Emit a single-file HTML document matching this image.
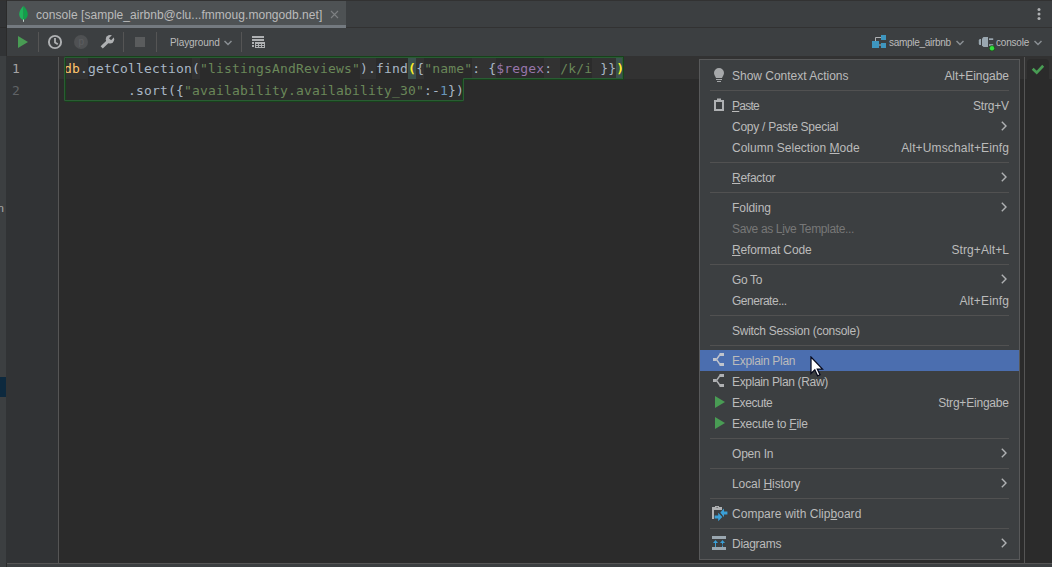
<!DOCTYPE html>
<html><head><meta charset="utf-8">
<style>
*{box-sizing:border-box;margin:0;padding:0}
html,body{width:1052px;height:567px;overflow:hidden;background:#2b2b2b}
body{position:relative;font-family:"Liberation Sans",sans-serif;font-size:12px;color:#bbbbbb}
.a{position:absolute}
.t{position:absolute;white-space:pre;line-height:16px}
#code .t{font-family:"DejaVu Sans Mono","Liberation Mono",monospace;font-size:13px;letter-spacing:0.174px;line-height:22px;color:#a9b7c6}
.vs{position:absolute;width:1px;background:#555555;top:32px;height:20px}
.mi{position:absolute;left:732px;margin-top:1px;white-space:pre;line-height:16px;color:#bbbbbb}
.sc{position:absolute;margin-top:1px;white-space:pre;line-height:16px;color:#bbbbbb;text-align:right}
.sep{position:absolute;left:710px;width:299px;height:1px;background:#515151}
.arr{position:absolute;left:1001px;width:6px;height:10px}
u{text-decoration:underline;text-underline-offset:1px}
</style></head><body>

<!-- tab bar -->
<div class="a" id="tabbar" style="left:0;top:0;width:1052px;height:28px;background:#3c3f41"></div>
<div class="a" style="left:0;top:0;width:1052px;height:1px;background:#323232"></div>
<div class="a" style="left:0;top:27px;width:1052px;height:1px;background:#323232"></div>
<div class="a" id="tab" style="left:7px;top:1px;width:339px;height:27px;background:#4e5254"></div>
<div class="a" style="left:7px;top:25px;width:339px;height:3px;background:#747a80"></div>
<svg class="a" style="left:18px;top:5px" width="11" height="18" viewBox="0 0 11 18"><path d="M5.5 0.8C3.2 3.6 1.2 6 1.2 9.3c0 3 2 4.9 4.3 5.9z" fill="#1fb45a"/><path d="M5.5 0.8C7.8 3.6 9.8 6 9.8 9.3c0 3-2 4.9-4.3 5.9z" fill="#10a14a"/><rect x="5" y="14.500" width="1" height="2.300" fill="#c4d3cc"/></svg>
<div class="t" id="tabtxt" style="left:36px;top:7px;letter-spacing:0.04px;color:#bbbbbb">console [sample_airbnb@clu...fmmoug.mongodb.net]</div>
<svg class="a" style="left:330px;top:10px" width="9" height="9" viewBox="0 0 9 9"><path d="M1 1L8 8M8 1L1 8" stroke="#7e8183" stroke-width="1.1" fill="none"/></svg>
<svg class="a" style="left:1036px;top:7px" width="6" height="14" viewBox="0 0 6 14"><circle cx="3" cy="2.5" r="1.500" fill="#afb1b3"/><circle cx="3" cy="7" r="1.500" fill="#afb1b3"/><circle cx="3" cy="11.5" r="1.500" fill="#afb1b3"/></svg>

<!-- toolbar -->
<div class="a" id="toolbar" style="left:0;top:28px;width:1052px;height:28px;background:#3c3f41"></div>
<div class="a" style="left:0;top:1px;width:6px;height:55px;background:#313335"></div>
<div class="a" style="left:0;top:27px;width:7px;height:1px;background:#2b2b2b"></div>
<div class="a" style="left:6px;top:0;width:1px;height:56px;background:#2b2b2b"></div>
<svg class="a" style="left:17px;top:35px" width="12" height="14" viewBox="0 0 12 14"><path d="M1 1L11 7L1 13z" fill="#499c54"/></svg>
<div class="vs" style="left:38px"></div>
<svg class="a" style="left:47px;top:34px" width="16" height="16" viewBox="0 0 16 16"><circle cx="8" cy="8" r="6.100" fill="none" stroke="#afb1b3" stroke-width="1.900"/><path d="M8 4v4.400l2.800 1.900" fill="none" stroke="#afb1b3" stroke-width="1.800"/></svg>
<svg class="a" style="left:73px;top:34px" width="16" height="16" viewBox="0 0 16 16"><circle cx="8" cy="8" r="7" fill="#4f5153"/><text x="8.200" y="10.600" font-family="Liberation Sans,sans-serif" font-size="10" text-anchor="middle" fill="#5d5f61">p</text></svg>
<svg class="a" style="left:99px;top:34px" width="16" height="16" viewBox="0 0 16 16"><path d="M2.700 13.300L9 7.400" stroke="#afb1b3" stroke-width="3.200" fill="none"/><circle cx="11" cy="5.200" r="4.200" fill="#afb1b3"/><path d="M11 5.200L16 0.200" stroke="#3c3f41" stroke-width="3" fill="none"/></svg>
<div class="vs" style="left:123px"></div>
<div class="a" style="left:135px;top:37px;width:10px;height:10px;background:#5a5c5d"></div>
<div class="vs" style="left:156px"></div>
<div class="t" id="pg" style="left:170px;top:35px;font-size:10px;letter-spacing:-0.1px;color:#bbbbbb">Playground</div>
<svg class="a" style="left:224px;top:40px" width="8" height="6" viewBox="0 0 8 6"><path d="M0.5 1L4 4.5L7.5 1" stroke="#8b9094" stroke-width="1.500" fill="none"/></svg>
<div class="vs" style="left:241px"></div>
<svg class="a" style="left:252px;top:36px" width="14" height="12" viewBox="0 0 14 12"><g fill="#afb1b3"><rect x="0" y="0" width="12" height="2"/><rect x="0" y="3" width="12" height="2"/><rect x="0" y="6" width="2" height="2"/><rect x="0" y="9" width="2" height="2"/><rect x="3" y="6" width="10" height="6"/></g><g fill="#3c3f41"><rect x="4" y="8" width="2" height="1"/><rect x="7" y="8" width="2" height="1"/><rect x="10" y="8" width="2" height="1"/><rect x="4" y="10" width="2" height="1"/><rect x="7" y="10" width="2" height="1"/><rect x="10" y="10" width="2" height="1"/></g></svg>

<svg class="a" style="left:871px;top:34px" width="16" height="15" viewBox="0 0 16 15"><path d="M4.5 7V3.5H10" stroke="#afb1b3" stroke-width="1" fill="none"/><path d="M8 11H10" stroke="#afb1b3" stroke-width="1"/><g fill="#3e96bf"><rect x="10" y="1" width="5" height="5"/><rect x="1" y="7" width="7" height="7"/><rect x="10" y="9" width="5" height="5"/></g></svg>
<div class="t" id="sa" style="left:889px;top:35px;font-size:10px;letter-spacing:-0.3px;color:#bbbbbb">sample_airbnb</div>
<svg class="a" style="left:956px;top:40px" width="8" height="6" viewBox="0 0 8 6"><path d="M0.5 1L4 4.5L7.5 1" stroke="#8b9094" stroke-width="1.500" fill="none"/></svg>
<svg class="a" style="left:978px;top:36px" width="18" height="16" viewBox="0 0 18 16"><g fill="#9aa7b0"><path d="M3 3v6h-1q-1.2 0-1.2-1.5v-3q0-1.5 1.2-1.5z"/><path d="M4 2.5L5.5 1H10v10H5.500L4 9.500z"/><rect x="11" y="2.300" width="4.200" height="1.700"/><rect x="11" y="8.200" width="4.200" height="1.700"/></g><circle cx="14" cy="12.200" r="3" fill="#22551f"/><circle cx="14" cy="12.200" r="2.200" fill="#30e03c"/></svg>
<div class="t" id="co" style="left:996px;top:35px;font-size:10px;letter-spacing:-0.2px;color:#bbbbbb">console</div>
<svg class="a" style="left:1034px;top:40px" width="8" height="6" viewBox="0 0 8 6"><path d="M0.5 1L4 4.5L7.5 1" stroke="#8b9094" stroke-width="1.500" fill="none"/></svg>

<!-- editor -->
<div class="a" id="leftstrip" style="left:0;top:56px;width:6px;height:511px;background:#3c3f41"></div>
<div class="a" style="left:0;top:377px;width:6px;height:20px;background:#0d293e"></div>
<div class="t" style="left:-2.500px;top:200px;font-size:11.500px;color:#a8a8a8">n</div>
<div class="a" id="gutter" style="left:6px;top:56px;width:52px;height:507px;background:#313335"></div>
<div class="a" style="left:58px;top:56px;width:1px;height:507px;background:#555555"></div>
<div class="a" style="left:7px;top:56px;width:1045px;height:1px;background:#323232"></div>
<div class="a" id="caretrow" style="left:59px;top:57px;width:993px;height:22px;background:#323232"></div>
<div class="a" style="left:1024px;top:57px;width:1px;height:506px;background:#555555"></div>
<div class="a" style="left:1027px;top:59px;width:22px;height:20px;border-radius:4px 4px 0 0;background:#2b2b2b"></div>
<svg class="a" style="left:1031px;top:63px" width="14" height="12" viewBox="0 0 14 12"><path d="M1.700 5.700L5.700 9.600L12.200 2.700" stroke="#499c54" stroke-width="2.700" fill="none"/></svg>
<div class="a" style="left:7px;top:563px;width:1045px;height:1px;background:#555555"></div>
<div class="a" style="left:7px;top:564px;width:1045px;height:3px;background:#3c3f41"></div>

<div class="a" style="left:88px;top:57px;width:104px;height:22px;background:#2b2b2b"></div>
<div class="a" style="left:200px;top:57px;width:160px;height:22px;background:#2b2b2b"></div>
<div class="a" style="left:376px;top:57px;width:32px;height:22px;background:#2b2b2b"></div>
<div class="a" style="left:408px;top:57px;width:8px;height:22px;background:#3b514d"></div>
<div class="a" style="left:424px;top:57px;width:48px;height:22px;background:#2b2b2b"></div>
<div class="a" style="left:496px;top:57px;width:48px;height:22px;background:#2b2b2b"></div>
<div class="a" style="left:560px;top:57px;width:32px;height:22px;background:#2b2b2b"></div>
<div class="a" style="left:616px;top:57px;width:8px;height:22px;background:#3b514d"></div>
<div id="code">
<div class="t" style="left:12px;top:58px;color:#a4a3a3;letter-spacing:0">1</div>
<div class="t" style="left:12px;top:80px;color:#606366;letter-spacing:0">2</div>
<div class="t" id="l1" style="left:64px;top:58px"><span style="color:#ffc66d">db</span>.<span>getCollection</span>(<span style="color:#6a8759">"listingsAndReviews"</span>).<span>find</span><span style="color:#ffef28;font-weight:bold">(</span>{<span style="color:#6a8759">"name"</span>: {<span style="color:#9876aa">$regex</span>: <span style="color:#6a8759">/k/i</span> }}<span style="color:#ffef28;font-weight:bold">)</span></div>
<div class="t" id="l2" style="left:64px;top:80px">        .sort({<span style="color:#6a8759">"availability.availability_30"</span>:-<span style="color:#6897bb">1</span>})</div>
</div>
<svg class="a" style="left:60px;top:54px" width="570" height="50" viewBox="60 54 570 50"><path d="M65.500 56.500H623.500V79.500H462.500V101.500H65.500z" fill="none" stroke="#17421b" stroke-width="1"/><path d="M64.500 57.500H622.500V78.500H463.500V100.500H64.500z" fill="none" stroke="#2a5c34" stroke-width="1"/></svg>

<!-- context menu -->
<div class="a" id="menu" style="left:699px;top:59px;width:321px;height:501px;background:#3c3f41;border:1px solid #58595a"></div>
<div class="a" style="left:700px;top:350px;width:319px;height:21px;background:#4b6eaf"></div>
<div id="mitems">
<div class="mi m" id="mi0" style="top:67px;letter-spacing:-0.012px;">Show Context Actions</div>
<div class="sc m" id="sc0" style="top:67px;left:944.4px;letter-spacing:-0.046px">Alt+Eingabe</div>
<div class="mi m" id="mi1" style="top:97px;letter-spacing:-0.747px;"><u>P</u>aste</div>
<div class="sc m" id="sc1" style="top:97px;left:973.1px;letter-spacing:-0.226px">Strg+V</div>
<div class="mi m" id="mi2" style="top:118px;letter-spacing:-0.263px;">Copy / Paste Special</div>
<svg class="arr" style="top:121px" viewBox="0 0 6 10"><path d="M0.800 0.800L5 5L0.800 9.200" stroke="#afb1b3" stroke-width="1.400" fill="none"/></svg>
<div class="mi m" id="mi3" style="top:139px;letter-spacing:0.010px;">Column Selection <u>M</u>ode</div>
<div class="sc m" id="sc3" style="top:139px;left:901.2px;letter-spacing:0.142px">Alt+Umschalt+Einfg</div>
<div class="mi m" id="mi4" style="top:169px;letter-spacing:-0.251px;"><u>R</u>efactor</div>
<svg class="arr" style="top:172px" viewBox="0 0 6 10"><path d="M0.800 0.800L5 5L0.800 9.200" stroke="#afb1b3" stroke-width="1.400" fill="none"/></svg>
<div class="mi m" id="mi5" style="top:199px;letter-spacing:-0.060px;">Folding</div>
<svg class="arr" style="top:202px" viewBox="0 0 6 10"><path d="M0.800 0.800L5 5L0.800 9.200" stroke="#afb1b3" stroke-width="1.400" fill="none"/></svg>
<div class="mi m" id="mi6" style="top:220px;letter-spacing:-0.358px;color:#777777;">Save as L<u>i</u>ve Template...</div>
<div class="mi m" id="mi7" style="top:241px;letter-spacing:-0.148px;"><u>R</u>eformat Code</div>
<div class="sc m" id="sc7" style="top:241px;left:951.4px;letter-spacing:0.100px">Strg+Alt+L</div>
<div class="mi m" id="mi8" style="top:271px;letter-spacing:-0.353px;">Go To</div>
<svg class="arr" style="top:274px" viewBox="0 0 6 10"><path d="M0.800 0.800L5 5L0.800 9.200" stroke="#afb1b3" stroke-width="1.400" fill="none"/></svg>
<div class="mi m" id="mi9" style="top:292px;letter-spacing:-0.485px;">Generate...</div>
<div class="sc m" id="sc9" style="top:292px;left:959.4px;letter-spacing:0.153px">Alt+Einfg</div>
<div class="mi m" id="mi10" style="top:322px;letter-spacing:-0.268px;">Switch Session (console)</div>
<div class="mi m" id="mi11" style="top:352px;letter-spacing:-0.293px;">Explain Plan</div>
<div class="mi m" id="mi12" style="top:373px;letter-spacing:-0.344px;">Explain Plan (Raw)</div>
<div class="mi m" id="mi13" style="top:394px;letter-spacing:-0.427px;">Execute</div>
<div class="sc m" id="sc13" style="top:394px;left:938.2px;letter-spacing:-0.206px">Strg+Eingabe</div>
<div class="mi m" id="mi14" style="top:415px;letter-spacing:-0.248px;">Execute to <u>F</u>ile</div>
<div class="mi m" id="mi15" style="top:445px;letter-spacing:-0.201px;">Open In</div>
<svg class="arr" style="top:448px" viewBox="0 0 6 10"><path d="M0.800 0.800L5 5L0.800 9.200" stroke="#afb1b3" stroke-width="1.400" fill="none"/></svg>
<div class="mi m" id="mi16" style="top:475px;letter-spacing:-0.088px;">Local <u>H</u>istory</div>
<svg class="arr" style="top:478px" viewBox="0 0 6 10"><path d="M0.800 0.800L5 5L0.800 9.200" stroke="#afb1b3" stroke-width="1.400" fill="none"/></svg>
<div class="mi m" id="mi17" style="top:505px;letter-spacing:0.027px;">Compare with Clip<u>b</u>oard</div>
<div class="mi m" id="mi18" style="top:535px;letter-spacing:-0.280px;">Diagrams</div>
<svg class="arr" style="top:538px" viewBox="0 0 6 10"><path d="M0.800 0.800L5 5L0.800 9.200" stroke="#afb1b3" stroke-width="1.400" fill="none"/></svg>
<div class="sep" style="top:90px"></div>
<div class="sep" style="top:162px"></div>
<div class="sep" style="top:192px"></div>
<div class="sep" style="top:264px"></div>
<div class="sep" style="top:315px"></div>
<div class="sep" style="top:345px"></div>
<div class="sep" style="top:438px"></div>
<div class="sep" style="top:468px"></div>
<div class="sep" style="top:498px"></div>
<div class="sep" style="top:528px"></div>
</div>
<!-- menu icons -->
<svg class="a" style="left:713px;top:67px" width="12" height="16" viewBox="0 0 12 16"><g fill="#a6a8aa"><path d="M6 1a5 5 0 0 1 5 5c0 2-1.300 3.200-2 5H3C2.300 9.200 1 8 1 6a5 5 0 0 1 5-5z"/><rect x="3" y="12" width="6" height="1"/><rect x="4" y="14" width="4" height="1"/></g></svg>
<svg class="a" style="left:713px;top:97px" width="12" height="15" viewBox="0 0 12 15"><path fill="#afb1b3" fill-rule="evenodd" d="M1 3H4V1.500H8V3H11V14H1zM3 5V12H9V5z"/></svg>
<svg class="a" style="left:712px;top:352px" width="13" height="15" viewBox="0 0 13 15"><g fill="#c0c4cc"><rect x="1" y="6" width="3.500" height="3"/><rect x="7.500" y="1" width="4.500" height="3"/><rect x="7.500" y="11" width="4.500" height="3"/></g><path d="M4.500 7.500L8 2.500M4.500 7.500L8 12.500" stroke="#c0c4cc" stroke-width="1.400" fill="none"/></svg>
<svg class="a" style="left:712px;top:373px" width="13" height="15" viewBox="0 0 13 15"><g fill="#afb1b3"><rect x="1" y="6" width="3.500" height="3"/><rect x="7.500" y="1" width="4.500" height="3"/><rect x="7.500" y="11" width="4.500" height="3"/></g><path d="M4.500 7.500L8 2.500M4.500 7.500L8 12.500" stroke="#afb1b3" stroke-width="1.400" fill="none"/></svg>
<svg class="a" style="left:714px;top:395px" width="12" height="14" viewBox="0 0 12 14"><path d="M1 1L11 7L1 13z" fill="#499c54"/></svg>
<svg class="a" style="left:714px;top:416px" width="12" height="14" viewBox="0 0 12 14"><path d="M1 1L11 7L1 13z" fill="#499c54"/></svg>
<svg class="a" style="left:711px;top:505px" width="18" height="17" viewBox="0 0 18 17"><path fill="#afb1b3" fill-rule="evenodd" d="M1 2H4V1H8V2H11V5H3V14H1zM5.500 2.500a0.600 0.600 0 1 0 1.200 0a0.600 0.600 0 1 0 -1.200 0z"/><path fill="#3a9fd6" d="M8.800 8L13 3.600V6.600H16.400V9.400H13V12.400z"/><path fill="#3a9fd6" d="M11.300 12L7.200 7.800V10.600H3.600V13.400H7.200V16.200z"/><path d="M8.200 6.600L12.900 12.900" stroke="#3c3f41" stroke-width="1" fill="none"/></svg>
<svg class="a" style="left:711px;top:535px" width="16" height="16" viewBox="0 0 16 16"><rect x="1" y="1" width="14" height="3" fill="#9aa7b0"/><rect x="1" y="12" width="14" height="3" fill="#9aa7b0"/><path d="M4.500 12V6" stroke="#3a9fd6" stroke-width="1"/><path d="M2 8L4.500 5L7 8z" fill="#3a9fd6"/><path d="M11.500 12V6" stroke="#3a9fd6" stroke-width="1" stroke-dasharray="1.500 1"/><path d="M9 8L11.500 5L14 8z" fill="#3a9fd6"/></svg>
<svg class="a" style="left:810px;top:356px" width="14" height="21" viewBox="0 0 14 21"><path d="M1 1V17.500L4.800 13.800L7.600 19.800L10 18.700L7.300 13H12.500z" fill="#ffffff" stroke="#05081c" stroke-width="1.250" stroke-linejoin="miter"/></svg>
</body></html>
